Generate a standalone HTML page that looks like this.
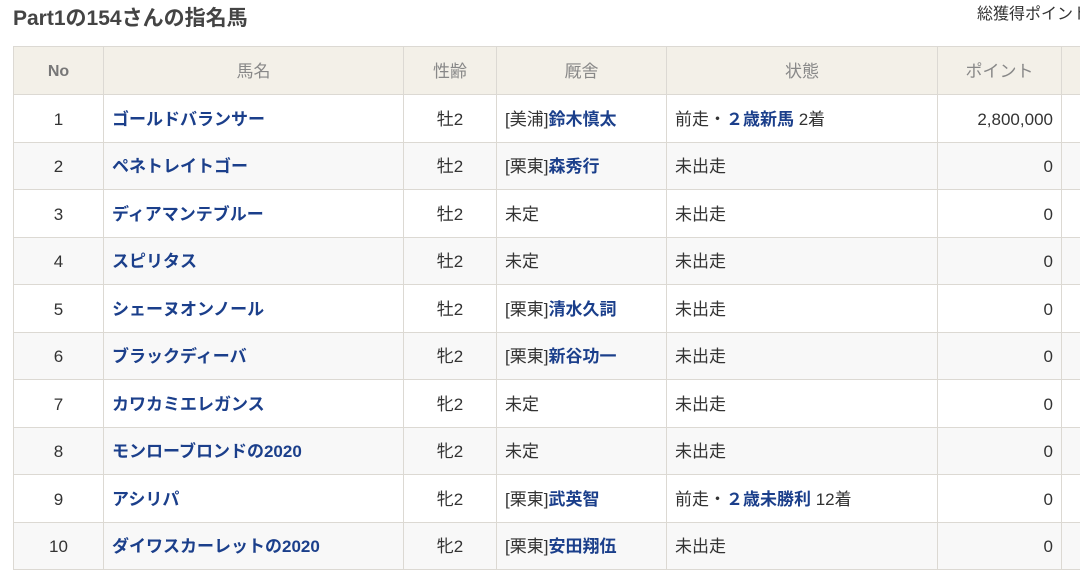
<!DOCTYPE html>
<html><head><meta charset="utf-8"><style>
body{margin:0;width:1080px;height:574px;overflow:hidden;background:#fff;font-family:"Liberation Sans","Noto Sans CJK JP",sans-serif;color:#333;position:relative}
h1{position:absolute;left:13px;top:5px;margin:0;font-size:21px;font-weight:bold;color:#444;line-height:28px}
.tot{position:absolute;left:977px;top:4px;font-size:16px;color:#333;white-space:nowrap;line-height:22px}
table{position:absolute;left:13px;top:46px;border-collapse:collapse;table-layout:fixed;width:1160px;font-size:17px}
td,th{border:1px solid #dcd9d3;padding:3px 8px 0;white-space:nowrap;overflow:hidden;box-sizing:border-box;vertical-align:middle;line-height:20px}
th{background:#f3f0e8;color:#888;font-weight:normal;height:48px;text-align:center;font-size:17px}
th:first-child{font-weight:bold;color:#777;font-size:16px}
tr.r td{height:47.5px}
tr.r:nth-child(odd) td{background:#f8f8f8}
td.c{text-align:center}
td.rt{text-align:right}
a{color:#1b3f8b;font-weight:bold;text-decoration:none}
</style></head><body>
<h1>Part1の154さんの指名馬</h1>
<div class="tot">総獲得ポイント</div>
<table>
<colgroup><col style="width:90px"><col style="width:300px"><col style="width:93px"><col style="width:170px"><col style="width:271px"><col style="width:124px"><col style="width:112px"></colgroup>
<tr><th>No</th><th>馬名</th><th>性齢</th><th>厩舎</th><th>状態</th><th>ポイント</th><th></th></tr>
<tr class="r"><td class="c"><span>1</span>&#8203;</td><td><a>ゴールドバランサー</a></td><td class="c">牡2</td><td>[美浦]<a>鈴木慎太</a></td><td>前走・<a>２歳新馬</a> 2着</td><td class="rt">2,800,000&#12288;</td><td></td></tr>
<tr class="r"><td class="c">2&#12288;</td><td><a>ペネトレイトゴー</a></td><td class="c">牡2</td><td>[栗東]<a>森秀行</a></td><td>未出走</td><td class="rt">&#12288;0</td><td></td></tr>
<tr class="r"><td class="c">3&#12288;</td><td><a>ディアマンテブルー</a></td><td class="c">牡2</td><td>未定</td><td>未出走</td><td class="rt">&#12288;0</td><td></td></tr>
<tr class="r"><td class="c">4&#12288;</td><td><a>スピリタス</a></td><td class="c">牡2</td><td>未定</td><td>未出走</td><td class="rt">&#12288;0</td><td></td></tr>
<tr class="r"><td class="c">5&#12288;</td><td><a>シェーヌオンノール</a></td><td class="c">牡2</td><td>[栗東]<a>清水久詞</a></td><td>未出走</td><td class="rt">&#12288;0</td><td></td></tr>
<tr class="r"><td class="c">6&#12288;</td><td><a>ブラックディーバ</a></td><td class="c">牝2</td><td>[栗東]<a>新谷功一</a></td><td>未出走</td><td class="rt">&#12288;0</td><td></td></tr>
<tr class="r"><td class="c">7&#12288;</td><td><a>カワカミエレガンス</a></td><td class="c">牝2</td><td>未定</td><td>未出走</td><td class="rt">&#12288;0</td><td></td></tr>
<tr class="r"><td class="c">8&#12288;</td><td><a>モンローブロンドの2020</a></td><td class="c">牝2</td><td>未定</td><td>未出走</td><td class="rt">&#12288;0</td><td></td></tr>
<tr class="r"><td class="c">9&#12288;</td><td><a>アシリパ</a></td><td class="c">牝2</td><td>[栗東]<a>武英智</a></td><td>前走・<a>２歳未勝利</a> 12着</td><td class="rt">&#12288;0</td><td></td></tr>
<tr class="r"><td class="c">10&#12288;</td><td><a>ダイワスカーレットの2020</a></td><td class="c">牝2</td><td>[栗東]<a>安田翔伍</a></td><td>未出走</td><td class="rt">&#12288;0</td><td></td></tr>
</table>
</body></html>
